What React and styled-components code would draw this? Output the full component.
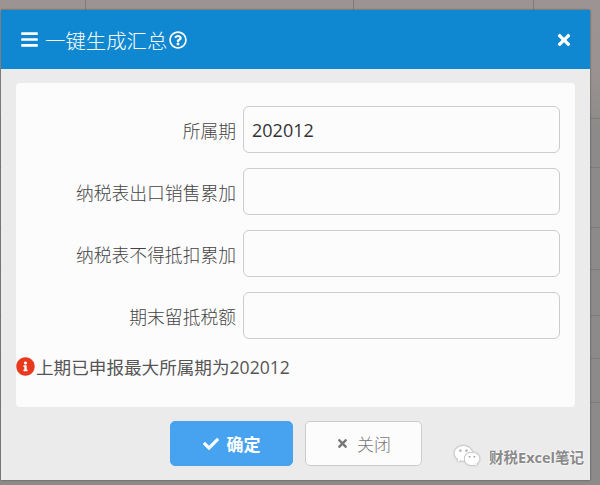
import React from 'react';
import styled, { createGlobalStyle } from 'styled-components';
import { FaBars, FaTimes, FaCheck, FaInfoCircle, FaRegQuestionCircle, FaWeixin } from 'react-icons/fa';

const GlobalStyle = createGlobalStyle`
    html, body {
        margin: 0;
        padding: 0;
        background: #8f8d8b;
        font-family: "Open Sans", "Noto Sans CJK SC", sans-serif;
    }
`;

// the dimmed table behind the dialog only shows as thin lines around its edge
const gridLine = 'linear-gradient(#7f7d7c, #7f7d7c)';
const lineX = [85, 353, 533];
const lineY = [118, 167, 227, 269, 315, 358, 402];

const Backdrop = styled.div`
    position: relative;
    width: 600px;
    height: 485px;
    padding: 10px 10px 5px 1px;
    box-sizing: border-box;
    overflow: hidden;
    background-color: #8f8d8b;
    background-repeat: no-repeat;
    background-image:
        ${lineX.map(() => gridLine).join(', ')},
        ${lineY.map(() => gridLine).join(', ')},
        linear-gradient(#9b9492, #9a9391 70px, #8c8b89 130px);
    background-size:
        ${lineX.map(() => '1px 10px').join(', ')},
        ${lineY.map(() => '100% 1px').join(', ')},
        100% 100%;
    background-position:
        ${lineX.map((x) => `${x}px 0`).join(', ')},
        ${lineY.map((y) => `0 ${y}px`).join(', ')},
        0 0;
`;

const Modal = styled.div`
    height: 100%;
    display: flex;
    flex-direction: column;
    background: #ebebec;
    box-shadow: 0 0 2px rgba(50, 50, 50, 0.7);
`;

const Header = styled.div`
    height: 59px;
    flex-shrink: 0;
    display: flex;
    align-items: center;
    justify-content: space-between;
    padding: 0 17px 0 19px;
    background: #1088d1;
    color: #fff;
`;

const Title = styled.div`
    display: flex;
    align-items: center;
    font-size: 20.4px;
    font-weight: 300;
`;

const MenuIcon = styled(FaBars)`
    width: 19px;
    height: 19px;
    margin-right: 6px;
`;

const HelpIcon = styled(FaRegQuestionCircle)`
    width: 18px;
    height: 18px;
    margin-left: 2px;
`;

const CloseIcon = styled(FaTimes)`
    width: 18px;
    height: 18px;
`;

const Card = styled.div`
    margin: 14px 15px 0;
    height: 324px;
    box-sizing: border-box;
    padding: 23px 15px 0 0;
    background: #fdfcfd;
    border-radius: 4px;
`;

const Row = styled.div`
    display: flex;
    align-items: center;
    justify-content: flex-end;
    margin-bottom: 15px;
`;

const Label = styled.label`
    margin-right: 7px;
    font-size: 17.8px;
    font-weight: 300;
    color: #444;
`;

const Input = styled.input`
    width: 317px;
    height: 47px;
    box-sizing: border-box;
    padding: 1px 8px 0;
    border: 1px solid #ccc;
    border-radius: 6px;
    background: #fdfcfd;
    font-family: inherit;
    font-size: 18px;
    color: #333;
`;

const Notice = styled.div`
    display: flex;
    align-items: center;
    margin-top: 13px;
    font-size: 17.6px;
    color: #555;
`;

const NoticeIcon = styled(FaInfoCircle)`
    width: 19px;
    height: 19px;
    margin-right: 1px;
    color: #e8391d;
`;

const Footer = styled.div`
    display: flex;
    align-items: flex-start;
    justify-content: center;
    gap: 12px;
    padding: 14px 0 0 1px;
`;

const Button = styled.button`
    display: flex;
    align-items: center;
    justify-content: center;
    gap: 8px;
    width: ${(p) => (p.$primary ? '123px' : '117px')};
    height: 45px;
    box-sizing: border-box;
    border-radius: 5px;
    border: 1px solid ${(p) => (p.$primary ? '#47a3f0' : '#ccc')};
    background: ${(p) => (p.$primary ? '#47a3f0' : '#fdfcfd')};
    color: ${(p) => (p.$primary ? '#fff' : '#777')};
    font-family: inherit;
    font-size: 17px;
    font-weight: ${(p) => (p.$primary ? 700 : 300)};
`;

const Watermark = styled.div`
    position: absolute;
    right: 16px;
    bottom: 16px;
    display: flex;
    align-items: center;
    gap: 9px;
    font-size: 14.5px;
    font-weight: 700;
    color: #8a8a8a;
    text-shadow: 0 0 2px #fff, 0 0 2px #fff;
`;

const WatermarkIcon = styled(FaWeixin)`
    width: 26px;
    height: 26px;
    color: #fff;
    filter: drop-shadow(0 0 1px #888);
`;

const fields = [
    { label: '所属期', value: '202012' },
    { label: '纳税表出口销售累加', value: '' },
    { label: '纳税表不得抵扣累加', value: '' },
    { label: '期末留抵税额', value: '' },
];

const App = () => {
    return (
        <Backdrop>
            <GlobalStyle />
            <Modal>
                <Header>
                    <Title>
                        <MenuIcon />
                        一键生成汇总
                        <HelpIcon />
                    </Title>
                    <CloseIcon />
                </Header>
                <Card>
                    {fields.map((f) => (
                        <Row key={f.label}>
                            <Label>{f.label}</Label>
                            <Input defaultValue={f.value} />
                        </Row>
                    ))}
                    <Notice>
                        <NoticeIcon />
                        上期已申报最大所属期为202012
                    </Notice>
                </Card>
                <Footer>
                    <Button $primary>
                        <FaCheck size={16} />
                        确定
                    </Button>
                    <Button>
                        <FaTimes size={13} />
                        关闭
                    </Button>
                </Footer>
            </Modal>
            <Watermark>
                <WatermarkIcon />
                财税Excel笔记
            </Watermark>
        </Backdrop>
    );
};

export default App;
